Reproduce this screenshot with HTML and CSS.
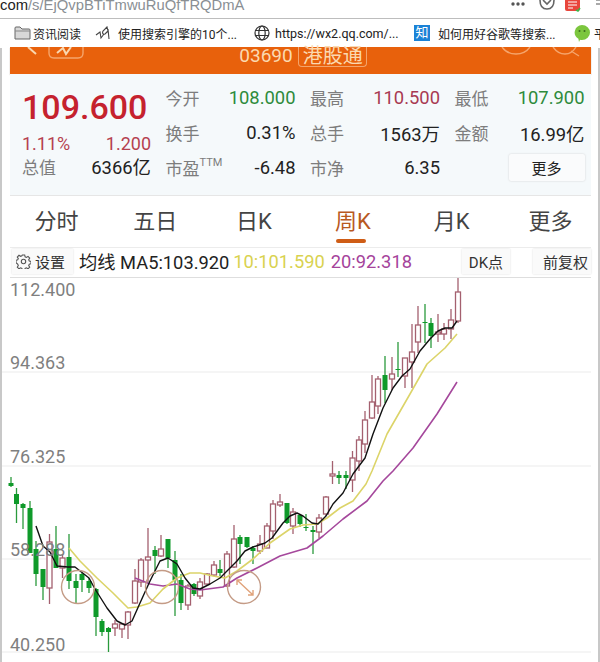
FILE: index.html
```html
<!DOCTYPE html>
<html lang="zh-CN">
<head>
  <meta charset="UTF-8" />
  <title>03690 港股通</title>
  <link rel="stylesheet" href="styles.css">
</head>
<body>
  <div class="addressbar">
    <div class="url"><span class="url-host">com</span>/s/EjQvpBTiTmwuRuQfTRQDmA</div>
    <div class="bar-icons">
      <svg class="bar-dots" width="16" height="6" viewBox="0 0 16 6"><circle cx="3" cy="3" r="1.7"/><circle cx="8" cy="3" r="1.7"/><circle cx="13" cy="3" r="1.7"/></svg>
      <svg class="bar-shield" width="18" height="11" viewBox="0 0 18 11"><path d="M2 0c0 6 3 9 7 9s7-3 7-9"/><path d="M5 0l4 4 4-4"/></svg>
      <svg class="bar-note" width="16" height="12" viewBox="0 0 16 12"><path class="note-red" d="M0 0h15v9q0 2-2 2H2q-2 0-2-2z"/><path class="note-line" d="M3 2h9M3 5h9M3 8h5"/><path class="note-tick" d="M11 10l2 1 2-3"/></svg>
      <svg class="bar-last" width="5" height="10" viewBox="0 0 5 10"><path d="M1 0h4M1 4h4"/></svg>
    </div>
  </div>

  <div class="bookmarks">
    <span class="bm bm-first">
      <svg width="17" height="14" viewBox="0 0 17 14"><path class="folder" d="M1 13V2q0-1 1-1h4l2 2h7q1 0 1 1v9z"/><path class="folder-line" d="M1 5h15"/></svg>
      资讯阅读
    </span>
    <span class="bm bm-pen">
      <svg width="16" height="14" viewBox="0 0 16 14"><path class="pen" d="M1 9l4-3 1 6 3-4M12 1L8 5c-1 2 0 4 2 3l3-3zM13 3l1 10"/></svg>
      使用搜索引擎的10个...
    </span>
    <span class="bm bm-globe">
      <svg width="16" height="16" viewBox="0 0 16 16"><g class="globe"><circle cx="8" cy="8" r="7"/><ellipse cx="8" cy="8" rx="3.2" ry="7"/><path d="M1 5.500h14M1 10.500h14"/></g></svg>
      https://wx2.qq.com/...
    </span>
    <span class="bm bm-zhi">
      <span class="zhi">知</span>
      如何用好谷歌等搜索...
    </span>
    <span class="bm bm-chat">
      <svg width="16" height="17" viewBox="0 0 16 17"><path class="chat" d="M8 0a8 7.500 0 0 1 0 15q-1 0-2-.3L5 17l-.6-3.200A8 7.500 0 0 1 8 0z"/><circle class="chat-eye" cx="5.500" cy="6" r="1"/><circle class="chat-eye" cx="10.500" cy="6" r="1"/></svg>
      <span class="bm-cut">平</span>
    </span>
  </div>

  <div class="screen">
    <div class="stock-head">
      <svg class="head-side" width="100" height="27" viewBox="0 0 100 27"><path d="M18 0l8 7" class="head-back"/><path d="M39 0v6q0 5 5 5h24q5 0 5-5V0" class="head-line"/><path d="M47 6l6-5 3 6 5-7" class="head-back"/></svg>
      <div class="head-title">
        <span class="code">03690</span>
        <span class="tag">港股通</span>
      </div>
      <svg class="head-side" width="100" height="27" viewBox="0 0 100 27"><path d="M11 0q5 7 14 7t14-7" class="head-line"/><path d="M62 0q5 7 12 7t11-7M80 4l8 5" class="head-line"/></svg>
    </div>

    <div class="quote">
      <div class="price-box">
        <div class="price">109.600</div>
        <div class="price-row change"><span>1.11%</span><span>1.200</span></div>
        <div class="price-row"><span class="label">总值</span><span>6366亿</span></div>
      </div>
      <div class="stat"><span class="label">今开</span><span class="green">108.000</span></div>
      <div class="stat"><span class="label">最高</span><span class="red">110.500</span></div>
      <div class="stat"><span class="label">最低</span><span class="green">107.900</span></div>
      <div class="stat"><span class="label">换手</span><span>0.31%</span></div>
      <div class="stat"><span class="label">总手</span><span>1563万</span></div>
      <div class="stat"><span class="label">金额</span><span>16.99亿</span></div>
      <div class="stat"><span class="label">市盈<sup class="ttm">TTM</sup></span><span>-6.48</span></div>
      <div class="stat"><span class="label">市净</span><span>6.35</span></div>
      <div class="stat stat-more"><button class="more-btn">更多</button></div>
    </div>

    <div class="tabs">
      <div class="tab">分时</div>
      <div class="tab">五日</div>
      <div class="tab">日K</div>
      <div class="tab tab-active">周K</div>
      <div class="tab">月K</div>
      <div class="tab">更多</div>
      <span class="tab-corner"></span>
    </div>

    <div class="toolbar">
      <button class="tool-btn tool-set">
        <svg width="15" height="15" viewBox="0 0 15 15"><g class="gear"><circle cx="7.500" cy="7.500" r="2.200"/><path d="M6.300 1h2.400l.4 1.800 1.300.6 1.600-1 1.700 1.700-1 1.600.6 1.300 1.700.4v2.400l-1.700.4-.6 1.300 1 1.600-1.700 1.700-1.600-1-1.300.6-.4 1.800H6.300l-.4-1.800-1.300-.6-1.600 1-1.700-1.700 1-1.600-.6-1.300L0 8.700V6.300l1.700-.4.6-1.300-1-1.600L3 1.300l1.600 1 1.300-.6z"/></g></svg>
        设置
      </button>
      <span class="ma ma-label">均线 MA5:103.920</span>
      <span class="ma ma10">10:101.590</span>
      <span class="ma ma20">20:92.318</span>
      <button class="tool-btn tool-dk">DK点</button>
      <button class="tool-btn tool-fq">前复权</button>
    </div>
  </div>

  <div class="chart">
    <svg id="kline" width="600" height="385" viewBox="0 277 600 385"></svg>
  </div>

  <script src="chart.js"></script>
</body>
</html>
```
FILE: styles.css
```css
body {
  font-family: Roboto, "Noto Sans CJK SC", sans-serif;
  margin: 0;
  padding: 0;
  width: 600px;
  height: 662px;
  overflow: hidden;
  background-color: #ffffff;
  color: #222;
}
button {
  font-family: inherit;
}
.addressbar {
  display: flex;
  justify-content: space-between;
  height: 18px;
  overflow: hidden;
  border-bottom: 1px solid #bdbdbd;
}
.url {
  font-family: "Liberation Sans", sans-serif;
  font-size: 14.8px;
  line-height: 10px;
  color: #8a8f94;
}
.url-host {
  color: #222;
}
.bar-icons {
  display: flex;
  align-items: flex-start;
}
.bar-dots {
  fill: #555;
  margin: 1px 12px 0 0;
}
.bar-shield {
  fill: none;
  stroke: #666;
  stroke-width: 1.6;
  margin-right: 9px;
}
.bar-note {
  margin-right: 14px;
}
.note-red {
  fill: #e8463c;
}
.note-line {
  stroke: #fff;
  fill: none;
}
.note-tick {
  stroke: #3bb54a;
  fill: none;
  stroke-width: 1.5;
}
.bar-last {
  stroke: #555;
}
.bookmarks {
  display: flex;
  align-items: center;
  height: 28px;
  font-size: 12px;
  color: #222;
  white-space: nowrap;
  overflow: hidden;
}
.bm {
  display: flex;
  align-items: center;
  flex: none;
}
.bm-first {
  gap: 2px;
  margin-left: 14px;
  width: 81px;
}
.bm-pen {
  gap: 7px;
  width: 159px;
}
.bm-globe {
  gap: 5px;
  width: 160px;
  font-size: 12.5px;
}
.bm-zhi {
  gap: 8px;
  width: 160px;
}
.bm-chat {
  gap: 4px;
}
.folder {
  fill: #d8d8d8;
  stroke: #666;
}
.folder-line {
  stroke: #888;
  fill: none;
}
.pen {
  fill: none;
  stroke: #444;
  stroke-width: 1.1;
}
.globe {
  fill: none;
  stroke: #333;
  stroke-width: 1.2;
}
.zhi {
  display: block;
  width: 16px;
  height: 16px;
  line-height: 16px;
  text-align: center;
  font-size: 13px;
  color: #fff;
  background-color: #1b82d6;
}
.chat {
  fill: #7cc63e;
}
.chat-eye {
  fill: #3d6b1e;
}
.screen {
  margin: 0 9px 0 10px;
  position: relative;
}
.stock-head {
  display: flex;
  height: 27px;
  background-color: #e8610c;
  box-shadow: 0 1px 1px #b9a79a;
}
.head-side {
  flex: none;
}
.head-back {
  fill: none;
  stroke: #f9d7b0;
  stroke-width: 2;
}
.head-line {
  fill: none;
  stroke: #f5a56c;
  stroke-width: 1.4;
}
.head-title {
  flex: 1;
  display: flex;
  justify-content: center;
  align-items: flex-start;
  gap: 5px;
  padding-left: 5px;
  color: #fbd9b0;
}
.code {
  font-size: 19px;
  line-height: 18px;
}
.tag {
  font-size: 20px;
  line-height: 19px;
  height: 19px;
  padding: 0 3px 0 4px;
  border: 1px solid #f3a56c;
  border-top: none;
  border-radius: 0 0 4px 4px;
}
.quote {
  display: grid;
  grid-template-columns: 129px 130px 130px 130px;
  grid-auto-rows: 35px;
  column-gap: 14.5px;
  padding: 6px 7px 10px 12px;
  height: 105px;
  background-color: #f5f9fb;
  border-bottom: 1px solid #e6e6e6;
  font-size: 18.4px;
}
.price-box {
  grid-row: 1 / span 3;
  display: flex;
  flex-direction: column;
}
.price {
  font-size: 34px;
  line-height: 40px;
  height: 45px;
  font-weight: 500;
  color: #c5222e;
  padding-top: 7px;
}
.price-row {
  display: flex;
  justify-content: space-between;
  height: 26px;
  line-height: 26px;
}
.change {
  color: #b5414f;
  height: 23px;
  line-height: 23px;
  font-size: 18px;
}
.label {
  font-size: 17px;
  color: #7d7d7d;
}
.stat {
  display: flex;
  justify-content: space-between;
  align-items: center;
}
.stat-more {
  justify-content: flex-end;
}
.ttm {
  font-size: 11px;
  line-height: 0;
  vertical-align: 9px;
}
.green {
  color: #2e8b3c;
}
.red {
  color: #a83a52;
}
.more-btn {
  width: 76px;
  height: 27px;
  padding: 0;
  font-size: 15px;
  color: #222;
  background-color: #fafbfc;
  border: none;
  border-radius: 2px;
  box-shadow: 0 0 2px #cfcfcf;
}
.tabs {
  display: grid;
  grid-template-columns: repeat(6, 98.8px);
  margin-left: -3px;
  height: 51px;
  position: relative;
}
.tab {
  text-align: center;
  font-size: 22px;
  line-height: 51px;
  color: #444;
  position: relative;
}
.tab-active {
  color: #b8591f;
}
.tab-active::after {
  content: "";
  position: absolute;
  left: 33px;
  bottom: 4px;
  width: 30px;
  height: 4px;
  border-radius: 2px;
  background-color: #cf5d16;
}
.tab-corner {
  position: absolute;
  right: 0;
  bottom: 10px;
  border-left: 6px solid transparent;
  border-bottom: 6px solid #444;
  margin-right: -13px;
}
.toolbar {
  display: flex;
  align-items: center;
  box-sizing: border-box;
  height: 31px;
  padding-bottom: 3px;
  border-top: 1px solid #ececec;
  border-bottom: 1px solid #dedede;
  font-size: 18.3px;
}
.tool-btn {
  display: flex;
  align-items: center;
  justify-content: center;
  flex: none;
  height: 25px;
  padding: 0;
  font-size: 15px;
  color: #333;
  background-color: #fafafa;
  border: none;
  box-shadow: 0 0 2px #dcdcdc;
}
.tool-set {
  width: 61px;
  gap: 4px;
  margin: 0 6px 0 2px;
  padding-right: 4px;
}
.gear {
  fill: none;
  stroke: #555;
  stroke-width: 1.1;
}
.ma {
  flex: none;
}
.ma-label {
  color: #222;
}
.ma10 {
  color: #d9d24f;
  margin-left: 4px;
}
.ma20 {
  color: #a5439b;
  margin-left: 6px;
}
.tool-dk {
  width: 48px;
  margin-left: auto;
}
.tool-fq {
  width: 58px;
  margin-left: 23px;
  padding-left: 7px;
}
.chart {
  height: 385px;
  position: relative;
}
.chart::before,
.chart::after {
  content: "";
  position: absolute;
  top: -230px;
  bottom: 0;
  width: 2px;
  background-color: #c8c8c8;
}
.chart::before {
  left: 0;
}
.chart::after {
  right: 0;
}
#kline {
  display: block;
}
.grid-line {
  stroke: #f2f2f2;
  stroke-width: 1.5;
}
.axis-label {
  font-family: Roboto, sans-serif;
  font-size: 18px;
  fill: #7f7f7f;
}
.wick-g {
  stroke: #2a9a3c;
  stroke-width: 1.3;
}
.wick-r {
  stroke: #a4606f;
  stroke-width: 1.3;
}
.body-g {
  fill: #0f9a2a;
}
.body-r {
  fill: #ffffff;
  stroke: #a4606f;
  stroke-width: 1.3;
}
.ma-line {
  fill: none;
  stroke-linejoin: round;
}
.line-5 {
  stroke: #111;
  stroke-width: 1.4;
}
.line-10 {
  stroke: #dcd469;
  stroke-width: 1.6;
}
.line-20 {
  stroke: #a5489c;
  stroke-width: 1.6;
}
.mark {
  fill: none;
  stroke: #c49b86;
  stroke-width: 1.4;
}
.mark-arrow {
  fill: none;
  stroke: #e0a27a;
  stroke-width: 1.4;
}
```
FILE: chart.js
```js
// [x, wick top, body top, body bottom, wick bottom, type]
var candles = [
  [11, 476, 482, 485, 486, 'g'], [16.5, 487, 493, 503, 522, 'g'], [23, 502, 503, 507, 528, 'g'],
  [30, 500, 507, 552, 552, 'g'], [36, 540, 548, 573, 585, 'g'], [43, 568, 568, 586, 599, 'g'],
  [49.5, 533, 541, 587, 603, 'r'], [56, 525, 548, 567, 567, 'g'], [62.5, 553, 557, 567, 577, 'r'],
  [69, 533, 556, 580, 588, 'g'], [76, 573, 580, 587, 602, 'g'], [82, 572, 573, 579, 591, 'g'],
  [89, 577, 580, 587, 592, 'g'], [96, 587, 588, 616, 635, 'g'], [102, 618, 620, 631, 635, 'g'],
  [108.5, 626, 627, 631, 651, 'g'], [115, 619, 623, 627, 635, 'r'], [122, 622, 623, 628, 637, 'r'],
  [128, 610, 611, 624, 638, 'r'], [135, 568, 580, 602, 603, 'r'], [141, 557, 559, 581, 586, 'r'],
  [148, 527, 556, 559, 581, 'r'], [155, 545, 549, 555, 573, 'g'], [161, 534, 548, 555, 556, 'r'],
  [168, 538, 538, 557, 567, 'g'], [175, 550, 559, 579, 615, 'g'], [181, 573, 579, 602, 609, 'g'],
  [188, 583, 585, 604, 609, 'r'], [194, 582, 583, 593, 595, 'g'], [200, 577, 581, 595, 598, 'r'],
  [207, 572, 573, 583, 584, 'r'], [214, 560, 564, 574, 575, 'r'], [220, 559, 568, 572, 575, 'g'],
  [227, 550, 553, 585, 586, 'r'], [234, 524, 538, 566, 567, 'r'], [240, 534, 536, 543, 563, 'g'],
  [247, 536, 536, 546, 547, 'g'], [253, 545, 547, 550, 563, 'g'], [260, 534, 543, 550, 553, 'r'],
  [267, 522, 525, 547, 547, 'r'], [273, 499, 503, 530, 538, 'r'], [280, 493, 501, 504, 506, 'r'],
  [287, 502, 502, 522, 523, 'g'], [293, 507, 511, 525, 533, 'r'], [300, 513, 514, 523, 526, 'g'],
  [306, 513, 526, 527, 530, 'g'], [313, 525, 529, 531, 553, 'g'], [319, 513, 517, 531, 537, 'r'],
  [326, 495, 496, 513, 515, 'r'], [332.5, 460, 473, 475, 483, 'r'], [339, 470, 474, 477, 483, 'g'],
  [346, 470, 474, 477, 488, 'g'], [352.5, 450, 457, 479, 491, 'r'], [359, 435, 439, 460, 470, 'r'],
  [365, 410, 419, 443, 452, 'r'], [372, 374, 401, 417, 418, 'r'], [378, 375, 378, 405, 413, 'r'],
  [385, 355, 374, 389, 402, 'g'], [392, 356, 373, 378, 389, 'r'], [398, 341, 368, 369, 376, 'g'],
  [405, 357, 357, 375, 387, 'r'], [412, 323, 351, 361, 387, 'r'], [418, 305, 324, 341, 352, 'r'],
  [425, 303, 321, 322, 342, 'g'], [431, 317, 322, 335, 347, 'g'], [438, 313, 331, 333, 341, 'r'],
  [444, 322, 328, 333, 339, 'r'], [451, 308, 319, 328, 338, 'r'], [458, 277, 291, 320, 322, 'r']
];

var ma5 = '36,525 43,545 50,551 57,565 68,566 75,566 89,577 95,588 107,607 117,620 125,624 132,620 140,602 150,580 160,560 168,557 177,563 185,577 193,587 200,588 210,583 220,577 237,560 245,550 253,546 265,542 272,537 283,522 290,515 297,512 303,515 312,522 318,523 326,515 333,503 343,492 353,473 365,457 373,433 383,407 393,387 402,375 410,368 420,350 430,338 438,330 445,327 452,327 457,320';
var ma10 = '69,547 80,560 97,577 113,592 128,607 137,606 150,602 163,588 177,577 190,572 200,572 213,575 225,577 237,570 253,558 270,542 290,528 303,524 317,523 327,517 340,507 353,500 366,483 372,470 387,433 410,393 427,363 445,347 457,333';
var ma20 = '135,577 150,583 163,585 177,583 190,588 200,589 223,586 237,577 257,567 280,555 307,547 323,535 343,518 367,500 383,480 393,470 413,447 437,413 457,381';

var svg = document.getElementById('kline');
var html = '';

[371, 465, 558, 651].forEach(function (y) {
  html += '<line class="grid-line" x1="2" x2="591" y1="' + y + '" y2="' + y + '"/>';
});

candles.forEach(function (c) {
  html += '<line class="wick-' + c[5] + '" x1="' + c[0] + '" x2="' + c[0] + '" y1="' + c[1] + '" y2="' + c[4] + '"/>';
  html += '<rect class="body-' + c[5] + '" x="' + (c[0] - 2.5) + '" y="' + c[2] + '" width="5" height="' + (c[3] - c[2]) + '"/>';
});

html += '<polyline class="ma-line line-20" points="' + ma20 + '"/>';
html += '<polyline class="ma-line line-10" points="' + ma10 + '"/>';
html += '<polyline class="ma-line line-5" points="' + ma5 + '"/>';

[78, 162, 244].forEach(function (x) {
  html += '<circle class="mark" cx="' + x + '" cy="586" r="16.5"/>';
});
html += '<path class="mark-arrow" d="M237 579l16 15M237 584v-5h5M253 589v5h-5"/>';

[['112.400', 295], ['94.363', 368], ['76.325', 462], ['58.288', 555], ['40.250', 650]].forEach(function (l) {
  html += '<text class="axis-label" x="10" y="' + l[1] + '">' + l[0] + '</text>';
});

svg.innerHTML = html;
```
